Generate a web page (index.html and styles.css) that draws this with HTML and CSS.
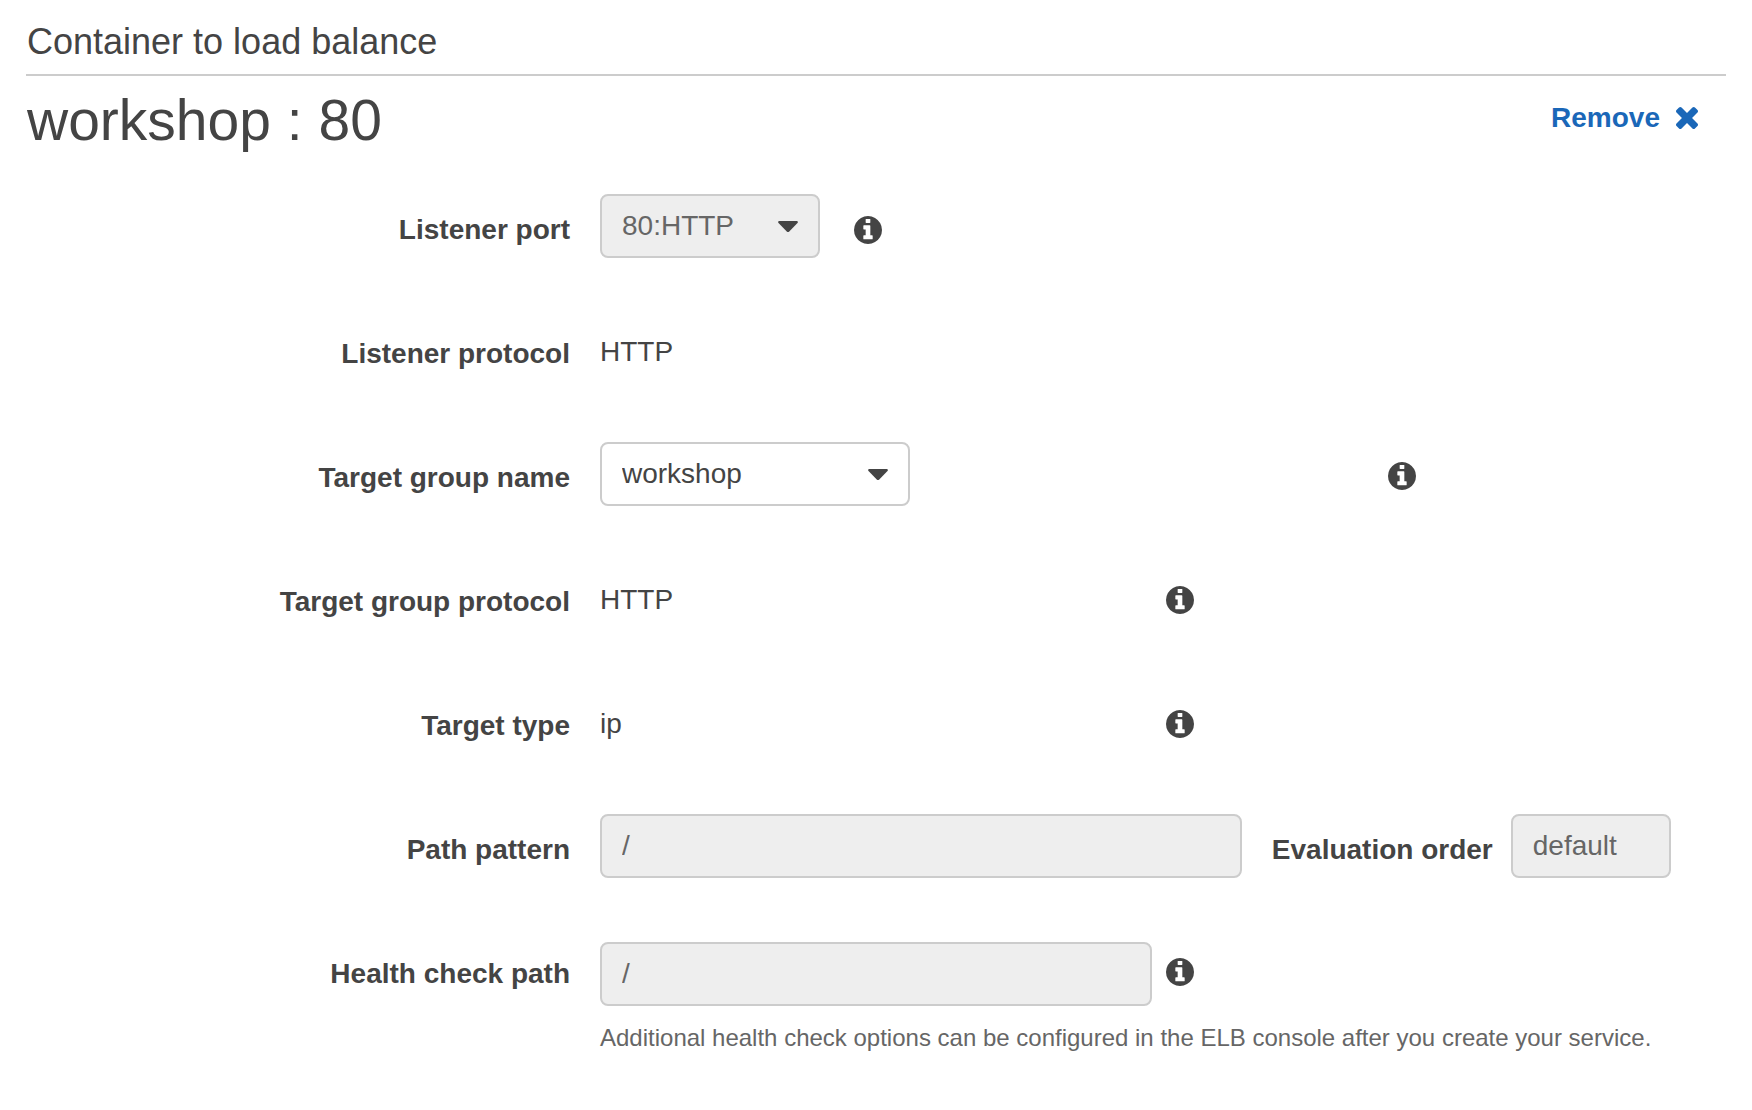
FILE: index.html
```html
<!DOCTYPE html>
<html lang="en">
<head>
<meta charset="utf-8">
<meta name="viewport" content="width=device-width, initial-scale=1">
<title>Container to load balance</title>
<link rel="stylesheet" href="styles.css">
</head>
<body>
<svg class="sprite" aria-hidden="true">
  <symbol id="info" viewBox="0 0 1536 1536">
    <path d="M1024 1248v-160q0-14-9-23t-23-9h-96V544q0-14-9-23t-23-9H544q-14 0-23 9t-9 23v160q0 14 9 23t23 9h96v320h-96q-14 0-23 9t-9 23v160q0 14 9 23t23 9h448q14 0 23-9t9-23zM896 352V192q0-14-9-23t-23-9H672q-14 0-23 9t-9 23v160q0 14 9 23t23 9h192q14 0 23-9t9-23zm640 416q0 209-103 385.500T1153.500 1433 768 1536t-385.500-103T103 1153.500 0 768t103-385.500T382.500 103 768 0t385.500 103T1433 382.500 1536 768z"/>
  </symbol>
  <symbol id="caret" viewBox="0 0 20 12">
    <path d="M1 0h18q1.500 0.500 0.500 2l-8.500 8.700q-1 0.800-2 0L0.500 2Q-0.500 0.500 1 0z"/>
  </symbol>
</svg>
<main class="panel">
  <h2 class="section-title">Container to load balance</h2>
  <div class="container-head">
    <h1 class="container-name">workshop : 80</h1>
    <button class="remove" type="button">Remove
      <svg class="cross" viewBox="110 302 1188 1188" aria-hidden="true"><path d="M1298 1322q0 40-28 68l-136 136q-28 28-68 28t-68-28L704 1232l-294 294q-28 28-68 28t-68-28l-136-136q-28-28-28-68t28-68l294-294-294-294q-28-28-28-68t28-68l136-136q28-28 68-28t68 28l294 294 294-294q28-28 68-28t68 28l136 136q28 28 28 68t-28 68L976 960l294 294q28 28 28 68z" transform="translate(0 -64)"/></svg>
    </button>
  </div>
  <form class="rows">
    <div class="row">
      <label class="label" for="port">Listener port</label>
      <div class="field field-wide-gap">
        <div class="select select-short">
          <select class="control" id="port" disabled><option>80:HTTP</option></select>
          <svg class="caret" aria-hidden="true"><use href="#caret"/></svg>
        </div>
        <svg class="info" role="img" aria-label="Info"><use href="#info"/></svg>
      </div>
    </div>
    <div class="row">
      <span class="label">Listener protocol</span>
      <div class="field"><span class="value">HTTP</span></div>
    </div>
    <div class="row">
      <label class="label" for="group">Target group name</label>
      <div class="field">
        <div class="slot-large">
          <div class="select select-medium">
            <select class="control" id="group"><option>workshop</option></select>
            <svg class="caret" aria-hidden="true"><use href="#caret"/></svg>
          </div>
        </div>
        <svg class="info" role="img" aria-label="Info"><use href="#info"/></svg>
      </div>
    </div>
    <div class="row">
      <span class="label">Target group protocol</span>
      <div class="field"><span class="value slot">HTTP</span>
        <svg class="info" role="img" aria-label="Info"><use href="#info"/></svg>
      </div>
    </div>
    <div class="row">
      <span class="label">Target type</span>
      <div class="field"><span class="value slot">ip</span>
        <svg class="info" role="img" aria-label="Info"><use href="#info"/></svg>
      </div>
    </div>
    <div class="row">
      <label class="label" for="pattern">Path pattern</label>
      <div class="field field-pattern">
        <input class="control pattern" id="pattern" type="text" value="/" disabled>
        <div class="order">
          <label class="label" for="order">Evaluation order</label>
          <input class="control order-input" id="order" type="text" value="default" disabled>
        </div>
      </div>
    </div>
    <div class="row">
      <label class="label" for="health">Health check path</label>
      <div class="health">
        <div class="field">
          <input class="control slot" id="health" type="text" value="/" disabled>
          <svg class="info info-health" role="img" aria-label="Info"><use href="#info"/></svg>
        </div>
        <p class="hint">Additional health check options can be configured in the ELB console after you create your service.</p>
      </div>
    </div>
  </form>
</main>
</body>
</html>
```
FILE: styles.css
```css
* {
  box-sizing: border-box;
}

body {
  margin: 0;
  background: #fff;
  color: #444;
  font: 28px/32px "Liberation Sans", Arial, sans-serif;
}

.sprite {
  display: none;
}

.panel {
  padding: 20px 26px;
}

.section-title {
  margin: 0;
  padding: 0 0 10px 1px;
  border-bottom: 2px solid #ccc;
  font-size: 36px;
  line-height: 44px;
  font-weight: 400;
}

.container-head {
  display: flex;
  justify-content: space-between;
  align-items: flex-start;
  padding: 12px 28px 42px 1px;
}

.container-name {
  margin: 0;
  font-size: 57px;
  line-height: 64px;
  font-weight: 400;
}

.remove {
  display: flex;
  align-items: center;
  gap: 16px;
  margin: 14px 0 0;
  padding: 0;
  border: 0;
  background: none;
  color: #1a67b8;
  font: inherit;
  font-weight: 700;
  cursor: pointer;
}

.cross {
  width: 22px;
  height: 22px;
  fill: currentColor;
}

.rows {
  display: flex;
  flex-direction: column;
  gap: 60px;
}

.row {
  display: grid;
  grid-template-columns: 32% minmax(0, 1fr);
  column-gap: 30px;
  min-height: 64px;
}

.label {
  padding-top: 20px;
  font-weight: 700;
  text-align: right;
}

.field {
  display: flex;
  align-items: flex-start;
  gap: 14px;
}

.field-wide-gap {
  gap: 34px;
}

.field-wide-gap .info {
  margin-top: 22px;
}

.field-pattern {
  gap: 30px;
}

.slot {
  flex: 0 0 49%;
}

.slot-large {
  flex: 0 0 calc(100% * 11 / 16);
}

.value {
  padding-top: 18px;
}

.control {
  height: 64px;
  margin: 0;
  padding: 0 20px;
  border: 2px solid #ccc;
  border-radius: 8px;
  background: #fff;
  color: #444;
  font: inherit;
  appearance: none;
}

.control:disabled {
  background: #eee;
  color: #666;
  opacity: 1;
}

.select {
  position: relative;
}

.select .control {
  display: block;
  width: 100%;
}

.select-short {
  width: 220px;
}

.select-medium {
  width: 310px;
}

.caret {
  position: absolute;
  top: 27px;
  right: 22px;
  width: 20px;
  height: 12px;
  fill: #444;
  pointer-events: none;
}

.info {
  flex: none;
  width: 28px;
  height: 28px;
  margin-top: 20px;
  fill: #444;
}

.pattern {
  flex: 0 0 57%;
  min-width: 0;
}

.order {
  display: flex;
  gap: 18px;
  white-space: nowrap;
}

.order-input {
  width: 160px;
}

.health {
  padding-top: 4px;
}

.info-health {
  margin-top: 16px;
}

.hint {
  margin: 16px 0 0;
  color: #666;
  font-size: 24px;
}
```
